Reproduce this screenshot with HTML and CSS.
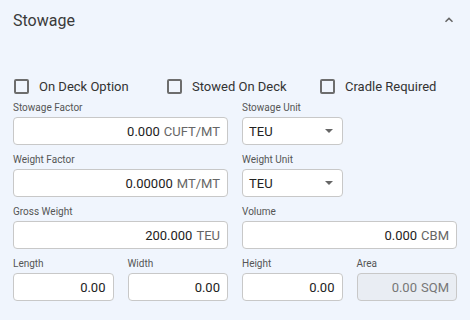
FILE: index.html
```html
<!DOCTYPE html>
<html>
<head>
<meta charset="utf-8">
<link rel="stylesheet" href="styles.css">
</head>
<body>
<div class="panel">
  <div class="header">
    <span class="title">Stowage</span>
    <svg class="chev" width="12" height="8" viewBox="0 0 12 8"><path d="M2.5 5.8 L6 2.4 L9.5 5.8" fill="none" stroke="#666" stroke-width="1.5"/></svg>
  </div>
  <div class="checks">
    <label class="check"><span class="box"></span>On Deck Option</label>
    <label class="check"><span class="box"></span>Stowed On Deck</label>
    <label class="check"><span class="box"></span>Cradle Required</label>
  </div>
  <div class="grid">
    <div class="field span2">
      <div class="lbl">Stowage Factor</div>
      <div class="input"><span class="val">0.000</span><span class="unit">CUFT/MT</span></div>
    </div>
    <div class="field">
      <div class="lbl">Stowage Unit</div>
      <div class="input select"><span class="val">TEU</span><span class="arrow"></span></div>
    </div>
    <div class="field"></div>
    <div class="field span2">
      <div class="lbl">Weight Factor</div>
      <div class="input"><span class="val">0.00000</span><span class="unit">MT/MT</span></div>
    </div>
    <div class="field">
      <div class="lbl">Weight Unit</div>
      <div class="input select"><span class="val">TEU</span><span class="arrow"></span></div>
    </div>
    <div class="field"></div>
    <div class="field span2">
      <div class="lbl">Gross Weight</div>
      <div class="input"><span class="val">200.000</span><span class="unit">TEU</span></div>
    </div>
    <div class="field span2">
      <div class="lbl">Volume</div>
      <div class="input"><span class="val">0.000</span><span class="unit">CBM</span></div>
    </div>
    <div class="field">
      <div class="lbl">Length</div>
      <div class="input"><span class="val">0.00</span></div>
    </div>
    <div class="field">
      <div class="lbl">Width</div>
      <div class="input"><span class="val">0.00</span></div>
    </div>
    <div class="field">
      <div class="lbl">Height</div>
      <div class="input"><span class="val">0.00</span></div>
    </div>
    <div class="field">
      <div class="lbl">Area</div>
      <div class="input disabled"><span class="val">0.00</span><span class="unit">SQM</span></div>
    </div>
  </div>
</div>
</body>
</html>
```
FILE: styles.css
```css
* { box-sizing: border-box; }
html, body { margin: 0; padding: 0; }
body {
  background: #f0f5fd;
  font-family: Roboto, "Liberation Sans", sans-serif;
  color: #222;
  width: 470px;
  height: 320px;
  overflow: hidden;
}
.panel { padding: 0 13px; }
.header {
  height: 40px;
  display: flex;
  align-items: center;
  justify-content: space-between;
}
.title { font-size: 16px; color: #3a3a3a; }
.chev { margin-right: 2px; }
.checks {
  display: flex;
  margin-top: 38px;
  height: 17px;
  align-items: center;
  margin-bottom: 7px;
}
.check {
  flex: 0 0 153px;
  display: flex;
  align-items: center;
  font-size: 13px;
  color: #333;
}
.box {
  width: 15px;
  height: 15px;
  border: 2px solid #6d6d6d;
  border-radius: 2px;
  margin-left: 1px;
  margin-right: 10px;
}
.grid {
  display: grid;
  grid-template-columns: repeat(4, 100.5px);
  column-gap: 14px;
  row-gap: 9px;
}
.span2 { grid-column: span 2; }
.lbl {
  font-size: 10px;
  line-height: 12px;
  color: #555;
  margin-bottom: 3px;
}
.input {
  height: 28px;
  background: #fff;
  border: 1px solid #c8c8c8;
  border-radius: 4px;
  display: flex;
  align-items: center;
  justify-content: flex-end;
  padding: 0 7px;
  font-size: 13px;
}
.val { color: #222; }
.unit { color: #666; margin-left: 4px; }
.select { justify-content: space-between; padding: 0 9px 0 6px; }
.arrow {
  width: 0; height: 0;
  border-left: 4px solid transparent;
  border-right: 4px solid transparent;
  border-top: 4px solid #666;
}
.disabled { background: #e9edf3; }
.disabled .val, .disabled .unit { color: #777; }
```
